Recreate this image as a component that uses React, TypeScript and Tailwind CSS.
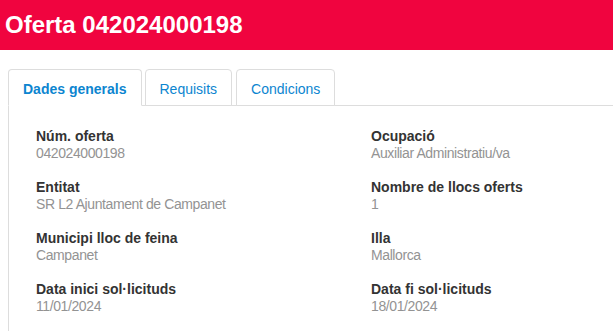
const fields: { label: string; value: string }[] = [
  { label: "Núm. oferta", value: "042024000198" },
  { label: "Ocupació", value: "Auxiliar Administratiu/va" },
  { label: "Entitat", value: "SR L2 Ajuntament de Campanet" },
  { label: "Nombre de llocs oferts", value: "1" },
  { label: "Municipi lloc de feina", value: "Campanet" },
  { label: "Illa", value: "Mallorca" },
  { label: "Data inici sol·licituds", value: "11/01/2024" },
  { label: "Data fi sol·licituds", value: "18/01/2024" },
];

const tabs = ["Dades generals", "Requisits", "Condicions"];

export default function App() {
  return (
    <div className="min-h-screen bg-white font-['Liberation_Sans',Arial,sans-serif]">
      {/* Header */}
      <div className="h-[50px] flex items-center px-[5px] bg-[#f0043f]">
        <h1 className="text-[24px] font-bold text-white leading-none">Oferta 042024000198</h1>
      </div>

      {/* Tabs */}
      <ul className="mt-[19px] ml-[8px] flex border-b border-[#dddddd]">
        {tabs.map((t, i) => (
          <li
            key={t}
            className={
              i === 0
                ? "-mb-px mr-[3px] rounded-t-[4px] border border-[#dddddd] border-b-white bg-white px-[14px] pt-[9px] pb-[6px] text-[14px] leading-[20px] font-bold text-[#0c85d0]"
                : "-mb-px mr-[4px] rounded-t-[4px] border border-[#dddddd] bg-white px-[14px] pt-[9px] pb-[6px] text-[14px] leading-[20px] text-[#0c85d0]"
            }
          >
            {t}
          </li>
        ))}
      </ul>

      {/* Body */}
      <div className="ml-[8px] border-l border-[#dddddd] pl-[27px] pt-[22px] pb-[20px]">
        <div className="grid grid-cols-[335px_1fr] gap-y-[17px]">
          {fields.map((f) => (
            <div key={f.label}>
              <div className="text-[14px] leading-[17px] font-bold text-[#333333]">{f.label}</div>
              <div className="text-[14px] leading-[17px] tracking-[-0.4px] text-[#939393]">{f.value}</div>
            </div>
          ))}
        </div>
      </div>
    </div>
  );
}
